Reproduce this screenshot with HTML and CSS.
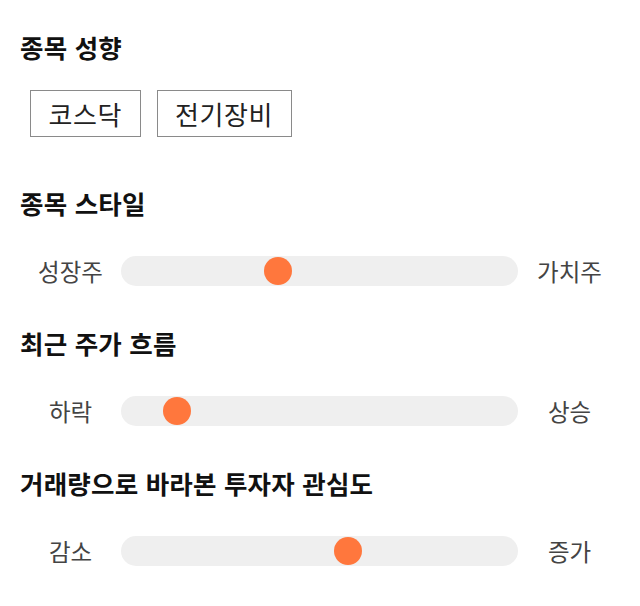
FILE: index.html
```html
<!DOCTYPE html>
<html lang="ko">
<head>
<meta charset="utf-8">
<title>종목 성향</title>
<link rel="stylesheet" href="styles.css">
</head>
<body>
<main class="page">
  <section class="section section-tags">
    <h2 class="title">종목 성향</h2>
    <div class="tags">
      <span class="tag">코스닥</span>
      <span class="tag">전기장비</span>
    </div>
  </section>

  <section class="section">
    <h2 class="title">종목 스타일</h2>
    <div class="slider-row">
      <span class="label">성장주</span>
      <div class="track"><span class="thumb" style="left: 143px"></span></div>
      <span class="label">가치주</span>
    </div>
  </section>

  <section class="section">
    <h2 class="title">최근 주가 흐름</h2>
    <div class="slider-row">
      <span class="label">하락</span>
      <div class="track"><span class="thumb" style="left: 42px"></span></div>
      <span class="label">상승</span>
    </div>
  </section>

  <section class="section">
    <h2 class="title">거래량으로 바라본 투자자 관심도</h2>
    <div class="slider-row">
      <span class="label">감소</span>
      <div class="track"><span class="thumb" style="left: 213px"></span></div>
      <span class="label">증가</span>
    </div>
  </section>
</main>
</body>
</html>
```

FILE: styles.css
```css
html, body {
  margin: 0;
  padding: 0;
  background: #ffffff;
}

body {
  font-family: "Noto Sans CJK KR", "Noto Sans", sans-serif;
  color: #111111;
}

.page {
  padding: 31px 20px 0 20px;
  display: flex;
  flex-direction: column;
}

.section {
  display: flex;
  flex-direction: column;
  gap: 37px;
  margin-bottom: 41px;
}

.section-tags {
  gap: 27px;
  margin-bottom: 50px;
}

.title {
  margin: 0;
  font-size: 25.5px;
  line-height: 32px;
  font-weight: 700;
  color: #111111;
  letter-spacing: 0.2px;
}

.tags {
  display: flex;
  gap: 16px;
  padding-left: 10px;
}

.tag {
  display: inline-block;
  border: 1px solid #8a8a8a;
  padding: 0 17.5px;
  height: 45px;
  line-height: 46px;
  font-size: 26px;
  letter-spacing: 0.6px;
  color: #222222;
}

.slider-row {
  display: grid;
  grid-template-columns: 101px 1fr 101px;
  align-items: center;
  height: 30px;
}

.label {
  text-align: center;
  font-size: 23.5px;
  line-height: 30px;
  color: #444444;
}

.track {
  position: relative;
  height: 30px;
  border-radius: 15px;
  background: #efefef;
  margin-right: 1px;
}

.thumb {
  position: absolute;
  top: 1px;
  width: 28px;
  height: 28px;
  border-radius: 50%;
  background: #ff773d;
}
```
